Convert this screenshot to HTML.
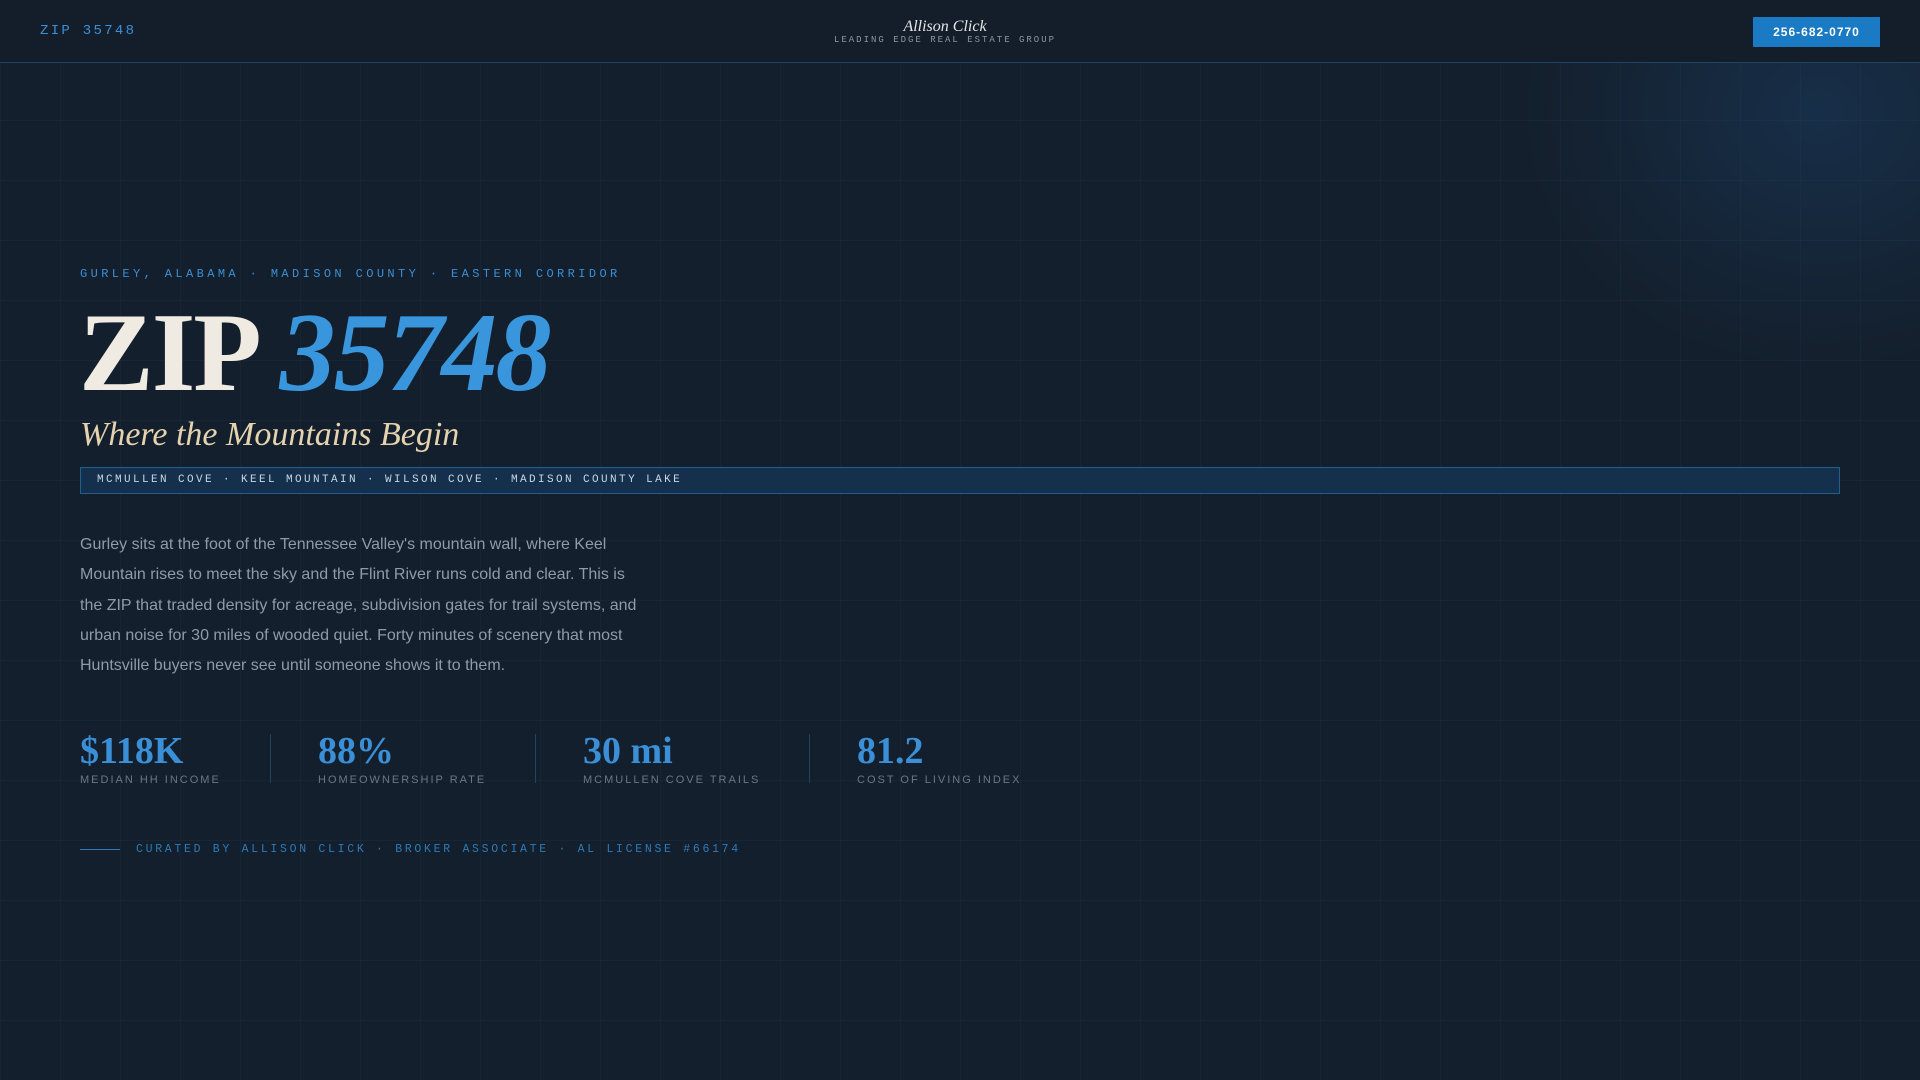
<!DOCTYPE html>
<html><head><meta charset="utf-8"><style>
*{margin:0;padding:0;box-sizing:border-box}
body{width:1920px;height:1080px;overflow:hidden;background:#131f2c;font-family:"Liberation Sans",sans-serif;position:relative;
background-image:radial-gradient(ellipse 300px 260px at 1820px 110px,rgba(30,70,115,.4),rgba(30,70,115,0) 100%),linear-gradient(rgba(40,70,100,.18) 1px,transparent 1px),linear-gradient(90deg,rgba(40,70,100,.14) 1px,transparent 1px);
background-size:auto,60px 60px,60px 60px}
.hdr{position:absolute;left:0;top:0;width:1920px;height:63px;background:#131e2a;border-bottom:1px solid #1f4566}
.mono{font-family:"Liberation Mono",monospace}
.a{position:absolute;white-space:nowrap}
</style></head><body>
<div class="hdr"></div>
<div class="a mono" style="left:40px;top:23px;font-size:14px;letter-spacing:2.3px;color:#3a8fd6">ZIP 35748</div>
<div class="a" style="left:0;width:1890px;text-align:center;top:18px;font-family:'Liberation Serif',serif;font-style:italic;font-size:16px;color:#e6e6e6">Allison Click</div>
<div class="a mono" style="left:0;width:1890px;text-align:center;top:35px;font-size:9px;letter-spacing:2px;color:#8a96a3">LEADING EDGE REAL ESTATE GROUP</div>
<div class="a" style="left:1753px;top:17px;width:127px;height:30px;background:#1a7ac4;color:#fff;font-weight:bold;font-size:12px;letter-spacing:1px;text-align:center;line-height:30px">256-682-0770</div>

<div class="a mono" style="left:80px;top:267px;font-size:12px;letter-spacing:3.4px;color:#3a8fd6">GURLEY, ALABAMA · MADISON COUNTY · EASTERN CORRIDOR</div>
<div class="a" style="left:79px;top:293px;font-family:'Liberation Serif',serif;font-weight:bold;font-size:112px;line-height:120px;color:#efeae2;letter-spacing:-2px">ZIP <span style="font-style:italic;color:#3a96dc">35748</span></div>
<div class="a" style="left:80px;top:416px;font-family:'Liberation Serif',serif;font-style:italic;font-size:34px;color:#e5d2ae">Where the Mountains Begin</div>
<div class="a mono" style="left:80px;top:467px;width:1760px;height:27px;background:#15304d;border:1px solid #225d90;font-size:11px;letter-spacing:2.4px;color:#c8d6e2;line-height:25px;padding-left:16px">MCMULLEN COVE · KEEL MOUNTAIN · WILSON COVE · MADISON COUNTY LAKE</div>
<div class="a" style="left:80px;top:530px;width:570px;white-space:normal;font-size:16px;line-height:30.3px;color:#909ba7">Gurley sits at the foot of the Tennessee Valley's mountain wall, where Keel Mountain rises to meet the sky and the Flint River runs cold and clear. This is the ZIP that traded density for acreage, subdivision gates for trail systems, and urban noise for 30 miles of wooded quiet. Forty minutes of scenery that most Huntsville buyers never see until someone shows it to them.</div>

<div class="a" style="left:270px;top:734px;width:1px;height:49px;background:#1f4566"></div>
<div class="a" style="left:535px;top:734px;width:1px;height:49px;background:#1f4566"></div>
<div class="a" style="left:809px;top:734px;width:1px;height:49px;background:#1f4566"></div>
<div class="a" style="left:80px;top:729px;font-family:'Liberation Serif',serif;font-weight:bold;font-size:38px;color:#3a8fd6">$118K</div>
<div class="a" style="left:318px;top:729px;font-family:'Liberation Serif',serif;font-weight:bold;font-size:38px;color:#3a8fd6">88%</div>
<div class="a" style="left:583px;top:729px;font-family:'Liberation Serif',serif;font-weight:bold;font-size:38px;color:#3a8fd6">30 mi</div>
<div class="a" style="left:857px;top:729px;font-family:'Liberation Serif',serif;font-weight:bold;font-size:38px;color:#3a8fd6">81.2</div>
<div class="a" style="left:80px;top:774px;font-size:11px;letter-spacing:2px;color:#6b7785">MEDIAN HH INCOME</div>
<div class="a" style="left:318px;top:774px;font-size:11px;letter-spacing:2px;color:#6b7785">HOMEOWNERSHIP RATE</div>
<div class="a" style="left:583px;top:774px;font-size:11px;letter-spacing:2px;color:#6b7785">MCMULLEN COVE TRAILS</div>
<div class="a" style="left:857px;top:774px;font-size:11px;letter-spacing:2px;color:#6b7785">COST OF LIVING INDEX</div>

<div class="a" style="left:80px;top:849px;width:40px;height:1px;background:#2e7ab8"></div>
<div class="a mono" style="left:136px;top:843px;font-size:11.5px;letter-spacing:2.7px;color:#2e7ab8">CURATED BY ALLISON CLICK · BROKER ASSOCIATE · AL LICENSE #66174</div>
</body></html>
